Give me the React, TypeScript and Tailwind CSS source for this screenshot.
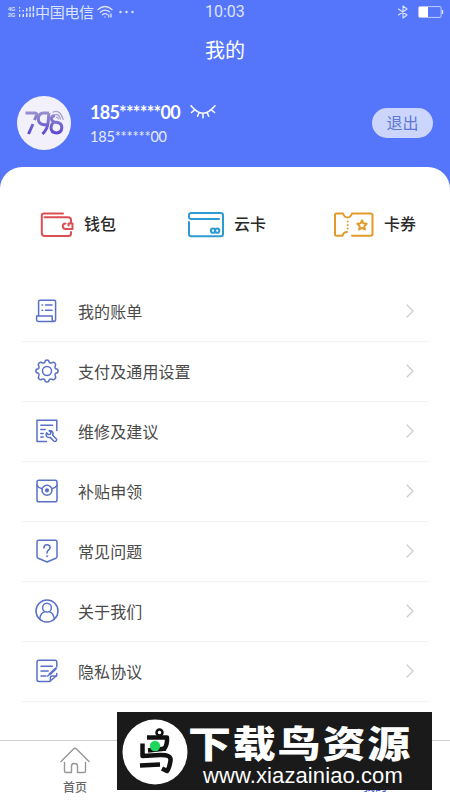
import React from "react";

const stroke = {
  fill: "none",
  stroke: "currentColor",
  strokeLinecap: "round" as const,
  strokeLinejoin: "round" as const,
};

function BillIcon() {
  return (
    <svg viewBox="0 0 24 24" className="size-6" {...stroke} strokeWidth="1.5">
      <path d="M3.6 17V2.6Q3.6 1.2 5 1.2H19.2Q20.6 1.2 20.6 2.6V20.4Q20.6 22.4 18.6 22.4H3.2Q1.6 22.4 1.6 20.8V17H17.2V20.6Q17.3 22.3 18.8 22.3" />
      <path d="M7 6H7.6M10.5 6H17M7 11.2H7.6M10.5 11.2H17" />
    </svg>
  );
}

function GearIcon() {
  return (
    <svg viewBox="0 0 24 24" className="size-6" {...stroke} strokeWidth="1.5">
      <path d="M9.8 3.2Q10 .9 12 .9T14.2 3.2Q15.2 4.5 16.7 3.9Q18.5 2.6 19.9 4T20.1 7.3Q19.5 8.9 20.8 9.8Q23.1 10 23.1 12T20.8 14.2Q19.5 15.1 20.1 16.7Q21.4 18.6 19.9 20T16.7 20.1Q15.2 19.5 14.2 20.8Q14 23.1 12 23.1T9.8 20.8Q8.8 19.5 7.3 20.1Q5.5 21.4 4.1 20T3.9 16.7Q4.5 15.1 3.2 14.2Q.9 14 .9 12T3.2 9.8Q4.5 8.9 3.9 7.3Q2.6 5.4 4.1 4T7.3 3.9Q8.8 4.5 9.8 3.2Z" />
      <circle cx="12" cy="12" r="4.5" />
    </svg>
  );
}

function RepairIcon() {
  return (
    <svg viewBox="0 0 24 24" className="size-6" {...stroke} strokeWidth="1.5">
      <path d="M11.5 22.5H2V1.3H21.8V11.5M5.8 6.3H17.6M5.8 10.4H10.2M5.8 14.4H8.2M5.8 18H8.2" />
      <path d="M14.2 11.7L16 13.6L15.3 15.2L13.2 15.5L11.6 13.7Q10.4 16.3 12 17.8Q13.3 18.9 15.2 18.4L18.8 22Q20 23.1 21.1 22T21.2 19.7L17.7 16.3Q18.6 13.7 17 12.3Q15.6 11.3 14.2 11.7Z" />
    </svg>
  );
}

function SubsidyIcon() {
  return (
    <svg viewBox="0 0 24 24" className="size-6" {...stroke} strokeWidth="1.5">
      <rect x="2" y="1.3" width="20" height="21.4" rx="1.8" />
      <path d="M2 6.3Q3.8 9.2 7.2 9.8M22 6.3Q20.2 9.2 16.8 9.8" />
      <circle cx="12" cy="11.3" r="5" />
      <circle cx="12" cy="11.3" r="1.4" fill="currentColor" />
    </svg>
  );
}

function QuestionIcon() {
  return (
    <svg viewBox="0 0 24 24" className="size-6" {...stroke} strokeWidth="1.5">
      <path d="M3.6 1.2H20.4Q22 1.2 22 2.8V17.6Q22 18.9 20.8 19.3L12 23L3.2 19.3Q2 18.9 2 17.6V2.8Q2 1.2 3.6 1.2Z" />
      <path d="M8.9 9Q8.9 5.8 12 5.8T15.1 8.7Q15.1 10 13.5 11.2T12 14" />
      <path d="M12 17.2V17.3" strokeWidth="1.8" />
    </svg>
  );
}

function AboutIcon() {
  return (
    <svg viewBox="0 0 24 24" className="size-6" {...stroke} strokeWidth="1.5">
      <circle cx="12" cy="12" r="11" />
      <circle cx="12" cy="8.7" r="4.4" />
      <path d="M4.7 20Q5.2 14.4 9.6 12.6M14.4 12.6Q18.8 14.4 19.3 20" />
    </svg>
  );
}

function PrivacyIcon() {
  return (
    <svg viewBox="0 0 24 24" className="size-6" {...stroke} strokeWidth="1.5">
      <path d="M21.8 8V3.2Q21.8 1.3 19.9 1.3H3.9Q2 1.3 2 3.2V20.6Q2 22.5 3.9 22.5H14.7L21.8 16.5V14.5" />
      <path d="M15.4 22V18.6Q15.4 17.1 17 17.1H21M6 7.2H17.4M6 12H13.2M6 16.9H11" />
      <path d="M20.7 9.6L14.6 15.3" strokeWidth="2.4" />
      <path d="M13.4 16.4L12.7 17" />
    </svg>
  );
}

const rows = [
  { label: "我的账单", Icon: BillIcon },
  { label: "支付及通用设置", Icon: GearIcon },
  { label: "维修及建议", Icon: RepairIcon },
  { label: "补贴申领", Icon: SubsidyIcon },
  { label: "常见问题", Icon: QuestionIcon },
  { label: "关于我们", Icon: AboutIcon },
  { label: "隐私协议", Icon: PrivacyIcon },
];

function StatusBar() {
  return (
    <div className="relative flex h-6 items-center justify-between pl-2 pr-[6px] text-[#dbe3ff]">
      <div className="flex items-center">
        <div className="w-[10px] font-['Liberation_Sans'] text-[5.5px] font-bold leading-[6.5px]">
          <div>4G</div>
          <div>2G</div>
        </div>
        <svg viewBox="0 0 17 12" className="h-3 w-[17px]" fill="currentColor">
          <path d="M1 1h1.3v1.5H1zM1 4h1.3v1.5H1zM1 8h1.3v3H1zM4.5 4h1.5v1.5H4.5zM4.5 8h1.5v3H4.5zM8 2h1.5v3.5H8zM8 7h1.5v4H8zM11.3 1h1.5v4.5h-1.5zM11.3 7h1.5v4h-1.5zM14.6 0h1.5v5.5h-1.5zM14.6 7h1.5v4h-1.5z" />
        </svg>
        <span className="-mt-px text-[15px] leading-6 tracking-[-0.3px]">中国电信</span>
        <svg viewBox="0 0 16 14" className="ml-[3px] h-[14px] w-4" {...stroke} strokeWidth="1.3">
          <path d="M1 4.5Q8 -1.5 15 4.5M3.3 7.2Q8 3.2 12.5 6.8M5.5 9.7Q8 7.7 10.2 9.5M8 12V12.1M11.8 10V12M14 9V12" />
        </svg>
        <svg viewBox="0 0 16 4" className="ml-[6px] h-1 w-4" fill="currentColor">
          <circle cx="1.5" cy="2" r="1.2" />
          <circle cx="7.5" cy="2" r="1.2" />
          <circle cx="13.5" cy="2" r="1.2" />
        </svg>
      </div>
      <span className="absolute left-[205px] top-0 font-[Roboto] text-[16px] leading-6">10:03</span>
      <div className="flex items-center gap-[9px]">
        <svg viewBox="0 0 12 14" className="h-[14px] w-3" {...stroke} strokeWidth="1.1">
          <path d="M1.5 4L10 10L6 13V1L10 4L1.5 10" />
        </svg>
        <svg viewBox="0 0 26 12" className="h-3 w-[26px]">
          <rect x=".6" y=".6" width="22.5" height="10.8" rx="1" fill="none" stroke="currentColor" strokeOpacity=".8" />
          <path d="M1 1H10V11H1Z" fill="#fff" />
          <path d="M24.5 4V8" stroke="currentColor" strokeWidth="1.4" />
        </svg>
      </div>
    </div>
  );
}

function Avatar() {
  return (
    <div className="flex size-[54px] items-center justify-center rounded-full bg-[#f1f0fb]">
      <svg viewBox="0 0 54 54" className="size-[54px]" fill="none" strokeWidth="3">
        <defs>
          <linearGradient id="logo" x1="0" y1="15" x2="0" y2="39" gradientUnits="userSpaceOnUse">
            <stop offset="0" stopColor="#9b93cf" />
            <stop offset="1" stopColor="#5944d0" />
          </linearGradient>
        </defs>
        <g stroke="url(#logo)">
          <path d="M8.5 17H18.5Q20.5 17.2 19 20.5L17.5 24M16 28L11.5 38" />
          <path d="M32 17H26.500Q21.500 17.300 21.300 22.800Q21.500 28.500 27 28.700H31M32 17Q31.500 20 31.300 25Q30.800 33 25.500 38" />
          <path d="M38 19.500Q34.200 20 34.400 23Q35 26 39.500 26.300Q44.800 26.800 44.800 31.600Q44.500 36.700 39.400 36.900Q34 36.700 34 31.500Q34 29 36.500 26" />
        </g>
        <path d="M35.500 16.500Q43 12.500 46.300 24M37.500 19Q42 17 43.600 23.500M39 21.500Q41 20.500 41.500 23.500" stroke="#aaa2cf" strokeWidth="1.300" />
      </svg>
    </div>
  );
}

function Profile() {
  return (
    <div className="flex h-[54px] items-center pl-[17px] pr-[17px]">
      <Avatar />
      <div className="ml-[19px] flex-1 text-white">
        <div className="flex h-[27px] items-center pt-[2px]">
          <span className="w-[92px] whitespace-nowrap font-[Lato] text-[18px] font-bold leading-6 tracking-[-0.75px]">185******00</span>
          <svg viewBox="0 0 26 14" className="ml-[8px] h-[14px] w-[26px]" {...stroke} strokeWidth="1.5">
            <path d="M1 .8Q13 15.5 25 .8M4.5 5L1.5 7.5M9 7.6L7.6 11.2M13 8.5V12.8M17.2 7.6L18.7 11.2M21.5 5L24.6 7.5" />
          </svg>
        </div>
        <div className="h-[25px] font-[Lato] text-[14.5px] leading-[25px] tracking-[-0.2px] text-[#e5eaff]">185******00</div>
      </div>
      <button className="h-[30px] w-[61px] rounded-full bg-[#ccd6fc] pb-[1px] text-[16px] leading-[29px] text-[#6078d5]">退出</button>
    </div>
  );
}

function Shortcuts() {
  return (
    <div className="flex h-[115px] items-center pl-10 text-[16px] font-medium text-[#292929]">
      <div className="flex w-[147px] items-center">
        <svg viewBox="0 0 34 26" className="h-[26px] w-[34px] text-[#dc4f55]" {...stroke} strokeWidth="2">
          <path d="M23 1.5H4Q1.8 1.5 1.8 3.5V21Q1.8 24 4.8 24H28.5Q31 24 31 21.5V20M4.5 5.3H28Q31 5.3 31 8V11" />
          <path d="M25.5 11.5Q22.8 11.7 22.8 14.2T25.7 17H32.5V11.5H28.5V13.5" />
        </svg>
        <span className="-mt-[3px] ml-[10px]">钱包</span>
      </div>
      <div className="flex w-[146px] items-center">
        <svg viewBox="0 0 38 26" className="h-[26px] w-[38px] text-[#2d9bd2]" {...stroke} strokeWidth="2">
          <path d="M2 10V22Q2 24.3 4.3 24.3H33.7Q36 24.3 36 22V3.3Q36 1 33.7 1H4.3Q2 1 2 3.3V5Q2 6.9 4.3 6.9H32" />
          <circle cx="26" cy="18.7" r="2.1" />
          <circle cx="30.2" cy="18.7" r="2.1" />
        </svg>
        <span className="-mt-[3px] ml-[9px]">云卡</span>
      </div>
      <div className="flex items-center">
        <svg viewBox="0 0 42 26" className="h-[26px] w-[42px] text-[#e39a2c]" {...stroke} strokeWidth="2">
          <path d="M19 23.8H37.5Q39.5 23.8 39.5 22V3.3Q39.5 1.5 37.5 1.5H19Q17.5 5.5 14.5 5.5T10 1.5H3.5Q2 1.5 2 3V22.3Q2 23.8 3.5 23.8H9.5Q10.5 20 14 20" />
          <path d="M14.7 9.5V9.6M14.7 13V13.1M14.7 16.5V16.6" />
          <path d="M29 8.3L30.4 11.3L33.7 11.8L31.3 14.1L31.9 17.4L29 15.8L26.1 17.4L26.7 14.1L24.3 11.8L27.6 11.3Z" />
        </svg>
        <span className="-mt-[3px] ml-[9px]">卡券</span>
      </div>
    </div>
  );
}

function Menu() {
  return (
    <div className="px-[21px]">
      {rows.map(({ label, Icon }) => (
        <div key={label} className="flex h-[60px] items-center border-b border-[#f3f3f3] pb-px pl-[14px] pr-[15px] text-[#5870c6]">
          <Icon />
          <span className="-mt-px ml-[19px] flex-1 text-[16px] tracking-[0.1px] text-[#4a4a4a]">{label}</span>
          <svg viewBox="0 0 8 14" className="h-[14px] w-2 text-[#c9c9c9]" {...stroke} strokeWidth="1.1">
            <path d="M1 1L7 7L1 13" />
          </svg>
        </div>
      ))}
    </div>
  );
}

function Watermark() {
  return (
    <div className="absolute left-[117px] top-[712px] flex h-[78px] w-[315px] bg-[#1a1a1a] pl-[5px] text-white">
      <svg viewBox="0 0 66 66" className="mt-[7px] size-[66px] shrink-0" fill="none">
        <circle cx="33" cy="33" r="32.5" fill="#fff" />
        <g stroke="#111" strokeWidth="4.5" strokeLinejoin="round">
          <path d="M25 18.5H45Q45.5 26 42 30" />
          <path d="M20.500 24.500V37L38 36Q49.500 35.500 48.500 41.500Q47.500 49 45 52L40 49.500" />
          <path d="M26 31.500L44 29.500M18 46.500L38 45.500" />
          <circle cx="37.500" cy="13.500" r="3" strokeWidth="2.500" />
        </g>
        <circle cx="33" cy="27" r="5.200" fill="#20d65c" />
      </svg>
      <div className="flex flex-1 flex-col">
        <div className="mt-[9px] h-[42px] origin-center scale-y-[0.86] whitespace-nowrap text-[43px] font-black leading-[42px] tracking-[1.8px]">下载鸟资源</div>
        <div className="mt-[3px] pl-[15px] font-['Liberation_Sans'] text-[22px] leading-[20px] tracking-[0.1px]">www.xiazainiao.com</div>
      </div>
    </div>
  );
}

export default function App() {
  return (
    <div className="relative flex h-[800px] w-[450px] flex-col overflow-hidden bg-[#5576fb] font-['Noto_Sans_CJK_SC',sans-serif]">
      <StatusBar />
      <h1 className="h-[52px] text-center text-[20px] leading-[52px] text-white">我的</h1>
      <div className="mt-5">
        <Profile />
      </div>
      <main className="mt-[17px] flex-1 rounded-t-[22px] bg-white">
        <Shortcuts />
        <Menu />
      </main>
      <nav className="flex h-[60px] shrink-0 justify-between border-t border-[#cfcfcf] bg-white px-[59px] text-[12px] text-[#666]">
        <div className="flex w-8 flex-col items-center">
          <svg viewBox="0 0 32 28" className="mt-[5px] h-7 w-8 text-[#969696]" {...stroke} strokeWidth="1.4">
            <path d="M2 15.5L14.5 3Q16 1.6 17.5 3L30 15.5" />
            <path d="M5.5 16.5V25Q5.5 26.5 7 26.5H12.5V20Q12.5 17.5 15.5 17.5T18.5 20V26.5H25Q26.5 26.5 26.5 25V16.5" />
          </svg>
          <span className="mt-[5px] font-medium leading-4">首页</span>
        </div>
        <div className="flex w-8 flex-col items-center justify-end pb-[6px] font-medium text-[#4560cf]">
          <span className="leading-4">我的</span>
        </div>
      </nav>
      <Watermark />
    </div>
  );
}
